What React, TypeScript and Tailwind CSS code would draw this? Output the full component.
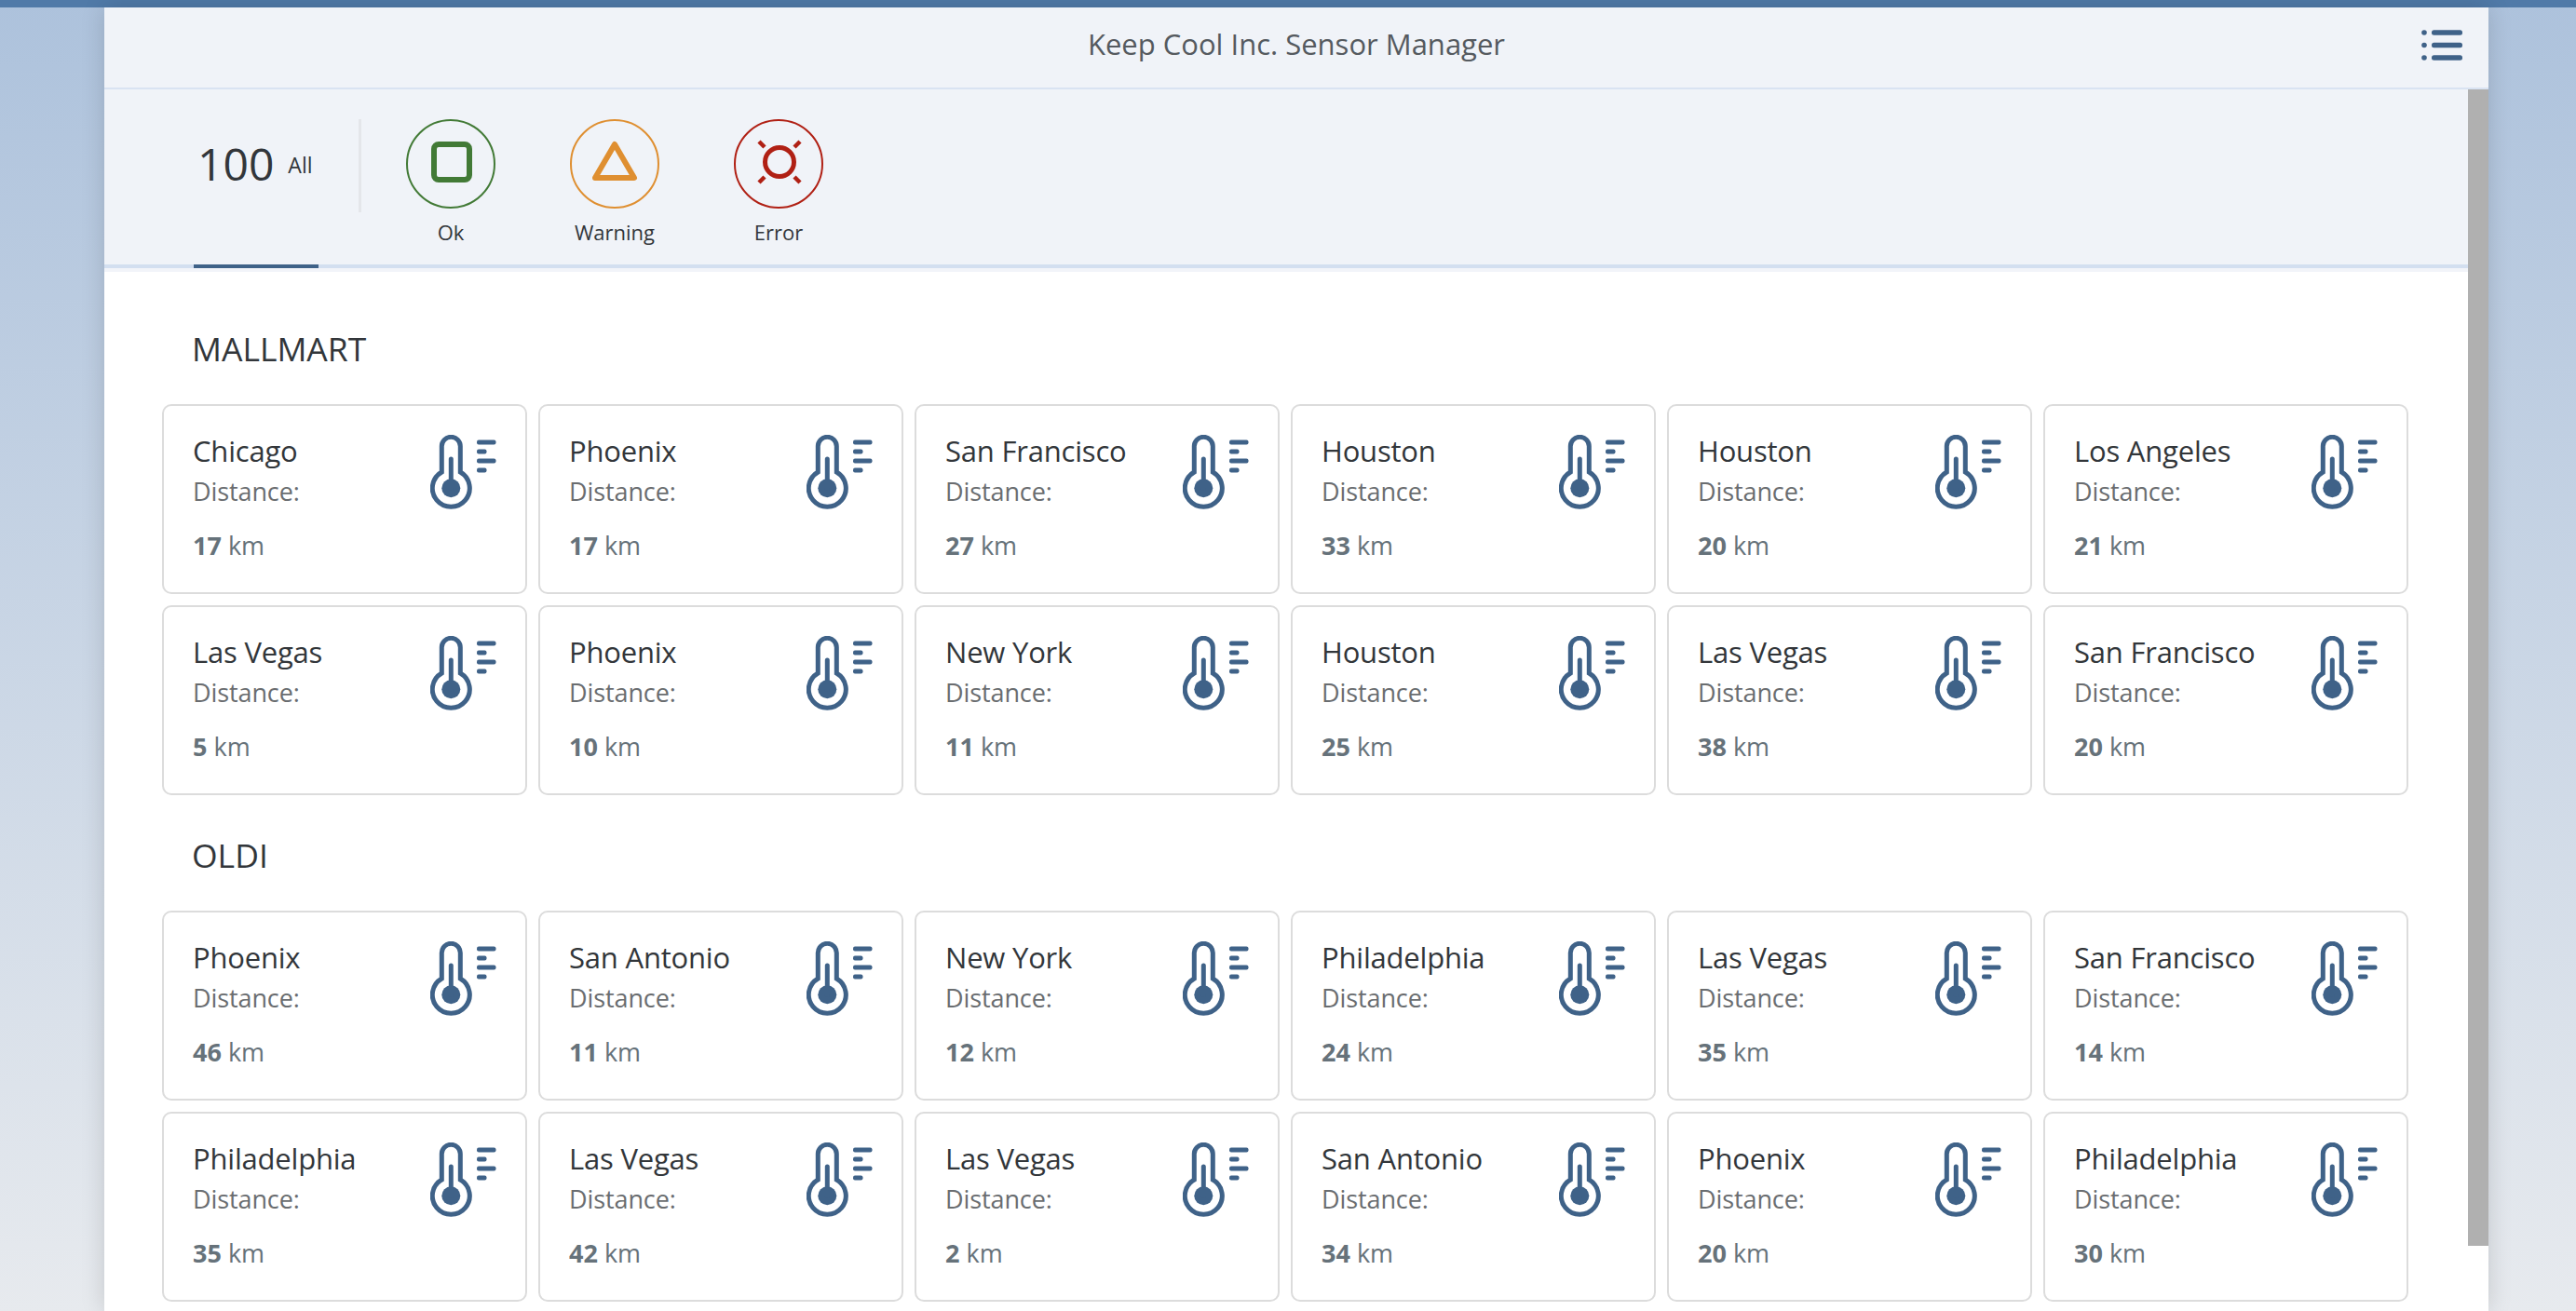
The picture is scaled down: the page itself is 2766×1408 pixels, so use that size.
const F = "font-['Open_Sans',sans-serif]";

const groups = [
  {
    name: "MALLMART",
    items: [
      ["Chicago", 17], ["Phoenix", 17], ["San Francisco", 27], ["Houston", 33], ["Houston", 20], ["Los Angeles", 21],
      ["Las Vegas", 5], ["Phoenix", 10], ["New York", 11], ["Houston", 25], ["Las Vegas", 38], ["San Francisco", 20],
    ] as [string, number][],
  },
  {
    name: "OLDI",
    items: [
      ["Phoenix", 46], ["San Antonio", 11], ["New York", 12], ["Philadelphia", 24], ["Las Vegas", 35], ["San Francisco", 14],
      ["Philadelphia", 35], ["Las Vegas", 42], ["Las Vegas", 2], ["San Antonio", 34], ["Phoenix", 20], ["Philadelphia", 30],
    ] as [string, number][],
  },
];

function Thermo() {
  return (
    <svg width="71" height="80" viewBox="0 0 71 80" className="shrink-0 text-[#3f6288]">
      <path d="M12.3 40V12.3a10 10 0 0 1 20 0V40a20 20 0 1 1-20 0z" fill="none" stroke="currentColor" strokeWidth="5" />
      <circle cx="22.3" cy="57.3" r="10" fill="currentColor" />
      <path d="M22.3 26V57" stroke="currentColor" strokeWidth="5" strokeLinecap="round" />
      <g fill="currentColor">
        <rect x="50" y="5.5" width="20.5" height="5" rx="2" />
        <rect x="50" y="15.5" width="10.5" height="5" rx="2" />
        <rect x="50" y="25.5" width="20.5" height="5" rx="2" />
        <rect x="50" y="35.5" width="10.5" height="5" rx="2" />
      </g>
    </svg>
  );
}

function Card({ city, km }: { city: string; km: number }) {
  return (
    <div className="h-[204px] rounded-[10px] border-2 border-[#dcdcdc] bg-white pl-[31px] pr-[31px] pt-[28px] flex justify-between items-start">
      <div>
        <div className="text-[31px] tracking-[-0.2px] leading-[40px] mb-[3px] text-[#32363a]">{city}</div>
        <div className="text-[27px] tracking-[-0.1px] leading-[42px] text-[#6a6d70]">Distance:</div>
        <div className="mt-[16px] text-[27px] leading-[42px] text-[#66727a]">
          <span className="font-bold">{km}</span> km
        </div>
      </div>
      <div className="pt-[3px]">
        <Thermo />
      </div>
    </div>
  );
}

function Status({ label, color, children }: { label: string; color: string; children: React.ReactNode }) {
  return (
    <div className="w-[176px] flex flex-col items-center">
      <div className={`w-[96px] h-[96px] rounded-full border-2 flex items-center justify-center ${color}`}>
        {children}
      </div>
      <div className="mt-[9px] text-[22px] leading-[32px] text-[#32363a]">{label}</div>
    </div>
  );
}

export default function App() {
  return (
    <div className={`h-[1408px] overflow-hidden flex flex-col bg-gradient-to-b from-[#adc2dc] to-[#e7eaee] ${F}`}>
      <div className="h-[8px] shrink-0 bg-[#507aa8]" />
      <div className="ml-[112px] w-[2560px] flex-1 min-h-0 flex flex-col bg-white shadow-[0_0_24px_rgba(0,0,0,0.15)]">
        <header className="relative h-[88px] shrink-0 bg-[#f0f3f8] border-b-2 border-[#d9e3f2] flex items-center justify-center">
          <span className="text-[31px] text-[#555a5f] -mt-[8px]">Keep Cool Inc. Sensor Manager</span>
          <svg width="46" height="36" viewBox="0 0 46 36" className="absolute left-[2488px] top-[22px] text-[#3f6288]">
            <g fill="currentColor">
              <circle cx="3" cy="5" r="2.8" />
              <circle cx="3" cy="18.5" r="2.8" />
              <circle cx="3" cy="32" r="2.8" />
              <rect x="11" y="2.2" width="33" height="5.6" rx="2.5" />
              <rect x="11" y="15.7" width="33" height="5.6" rx="2.5" />
              <rect x="11" y="29.2" width="33" height="5.6" rx="2.5" />
            </g>
          </svg>
        </header>
        <div className="flex flex-1 min-h-0">
          <div className="flex-1 min-w-0 flex flex-col">
            <div className="h-[192px] shrink-0 bg-[#f0f3f8] border-b-4 border-[#d3dff0] relative flex items-start pt-[32px] pl-[96px]">
              <div className="w-[177px] h-[100px] pl-[4px] flex items-center text-[#32363a]">
                <span className="text-[48px] leading-none -mt-[4px]">100</span>
                <span className="ml-[15px] text-[23px] leading-none -mt-[2px]">All</span>
              </div>
              <div className="w-[3px] h-[100px] bg-[#e4e6ea]" />
              <div className="flex ml-[8px]">
                <Status label="Ok" color="border-[#427a36]">
                  <svg width="44" height="44" viewBox="0 0 44 44" className="-mt-[5px] ml-[1px]">
                    <rect x="3" y="3" width="38" height="38" rx="5" fill="none" stroke="#427a36" strokeWidth="6" />
                  </svg>
                </Status>
                <Status label="Warning" color="border-[#df8f31]">
                  <svg width="50" height="46" viewBox="0 0 50 46" className="-mt-[6px]">
                    <path d="M25 5 L46 41 H4 Z" fill="none" stroke="#df8f31" strokeWidth="6" strokeLinejoin="round" />
                  </svg>
                </Status>
                <Status label="Error" color="border-[#b02014]">
                  <svg width="50" height="50" viewBox="0 0 50 50" className="-mt-[5px] ml-[1px]">
                    <circle cx="25" cy="25" r="15.5" fill="none" stroke="#b02014" strokeWidth="5" />
                    <path d="M3 3L9 9M47 3L41 9M3 47L9 41M47 47L41 41" stroke="#b02014" strokeWidth="4.5" />
                  </svg>
                </Status>
              </div>
              <div className="absolute left-[96px] bottom-[-4px] w-[134px] h-[4px] bg-[#3f6288]" />
            </div>
            <div className="h-[4px] shrink-0 bg-[#f2f4f9]" />
            <main className="flex-1 min-h-0 bg-white pl-[62px]">
              {groups.map((g) => (
                <section key={g.name} className="w-[2412px] h-[544px] pt-[59px]">
                  <h2 className="pl-[32px] text-[35.5px] leading-[46px] text-[#32363a]">{g.name}</h2>
                  <div className="mt-[37px] grid grid-cols-6 gap-[12px]">
                    {g.items.map(([c, k], i) => (
                      <Card key={i} city={c} km={k} />
                    ))}
                  </div>
                </section>
              ))}
            </main>
          </div>
          <div className="w-[22px] h-[1242px] shrink-0 bg-[#b0b0b0]" />
        </div>
      </div>
    </div>
  );
}
